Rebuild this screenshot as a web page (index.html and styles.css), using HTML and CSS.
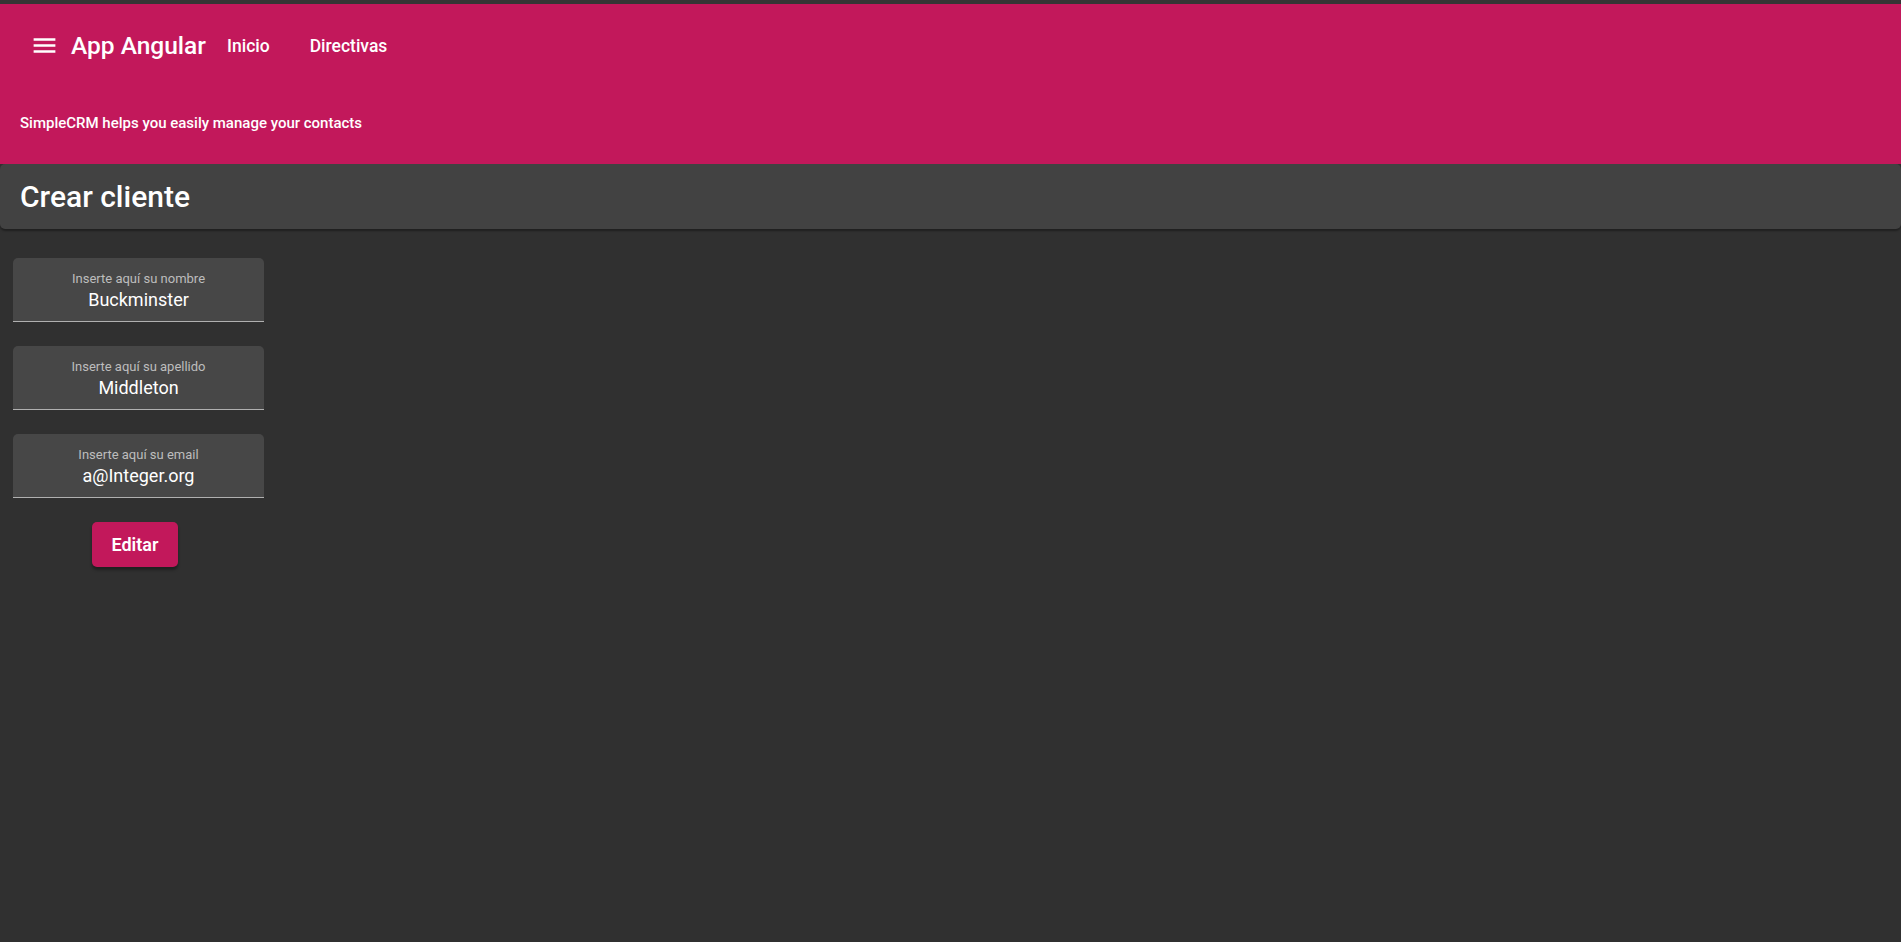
FILE: index.html
```html
<!doctype html>
<html lang="es">
	<head>
		<meta charset="UTF-8" />
		<meta name="viewport" content="width=device-width, initial-scale=1.0" />
		<title>App Angular</title>
		<link rel="stylesheet" href="styles.css">
	</head>
	<body>
		<header class="toolbar">
			<div class="toolbar-row main-row">
				<button class="menu-btn" aria-label="Menu">
					<svg width="29" height="29" viewBox="0 0 24 24"><path fill="#fff" d="M3 18h18v-2H3v2zm0-5h18v-2H3v2zm0-7v2h18V6H3z"/></svg>
				</button>
				<span class="app-title">App Angular</span>
				<nav class="nav">
					<a href="#">Inicio</a>
					<a href="#">Directivas</a>
				</nav>
			</div>
			<div class="toolbar-row subtitle">SimpleCRM helps you easily manage your contacts</div>
		</header>

		<div class="page-card">
			<h1>Crear cliente</h1>
		</div>

		<form class="client-form" onsubmit="return false">
			<label class="field">
				<span class="field-label">Inserte aquí su nombre</span>
				<input type="text" value="Buckminster">
			</label>
			<label class="field">
				<span class="field-label">Inserte aquí su apellido</span>
				<input type="text" value="Middleton">
			</label>
			<label class="field">
				<span class="field-label">Inserte aquí su email</span>
				<input type="email" value="a@Integer.org">
			</label>
			<div class="actions">
				<button type="submit" class="btn-primary">Editar</button>
			</div>
		</form>
	</body>
</html>
```

FILE: styles.css
```css
html,
body {
	margin: 0;
	height: 100%;
}
body {
	font-family: Roboto, "Noto Sans", Arial, sans-serif;
	background: #303030;
	color: white;
	border-top: 4px solid #353535;
	box-sizing: border-box;
}
.toolbar {
	background: #c2185b;
	height: 160px;
	display: flex;
	flex-direction: column;
}
.toolbar-row {
	height: 80px;
	box-sizing: border-box;
	display: flex;
	align-items: center;
	padding: 0 20px;
}
.main-row {
	padding-top: 3px;
}
.menu-btn {
	background: none;
	border: none;
	padding: 0;
	margin: 0 12px 0 10px;
	display: flex;
	cursor: pointer;
}
.app-title {
	font-size: 24.5px;
	font-weight: 500;
}
.nav {
	display: flex;
	margin-left: 1px;
}
.nav a {
	color: white;
	text-decoration: none;
	font-size: 17.5px;
	font-weight: 500;
	padding: 0 20px;
}
.subtitle {
	font-size: 15px;
	font-weight: 500;
	padding-bottom: 2px;
}
.page-card {
	background: #424242;
	border-radius: 5px;
	height: 65px;
	display: flex;
	align-items: center;
	padding: 0 20px;
	box-shadow: 0 2px 2px rgba(0, 0, 0, 0.35);
}
.page-card h1 {
	margin: 0;
	font-size: 30px;
	font-weight: 500;
}
.client-form {
	display: flex;
	flex-direction: column;
	gap: 24px;
	width: 251px;
	margin: 29px 0 0 13px;
}
.field {
	background: #474747;
	border-radius: 5px 5px 0 0;
	border-bottom: 1px solid #b0b0b0;
	height: 64px;
	box-sizing: border-box;
	display: flex;
	flex-direction: column;
	align-items: center;
	padding-top: 13px;
}
.field-label {
	font-size: 13px;
	color: #bdbdbd;
	line-height: 15px;
}
.field input {
	background: none;
	border: none;
	outline: none;
	color: white;
	font-family: inherit;
	font-size: 18px;
	text-align: center;
	width: 100%;
	padding: 0;
	margin-top: 3px;
	line-height: 22px;
}
.actions {
	display: flex;
	padding-left: 79px;
}
.btn-primary {
	background: #c2185b;
	color: white;
	border: none;
	border-radius: 5px;
	width: 86px;
	height: 45px;
	font-family: inherit;
	font-size: 18px;
	font-weight: 600;
	cursor: pointer;
	box-shadow: 0 3px 3px rgba(0, 0, 0, 0.35);
}
```
